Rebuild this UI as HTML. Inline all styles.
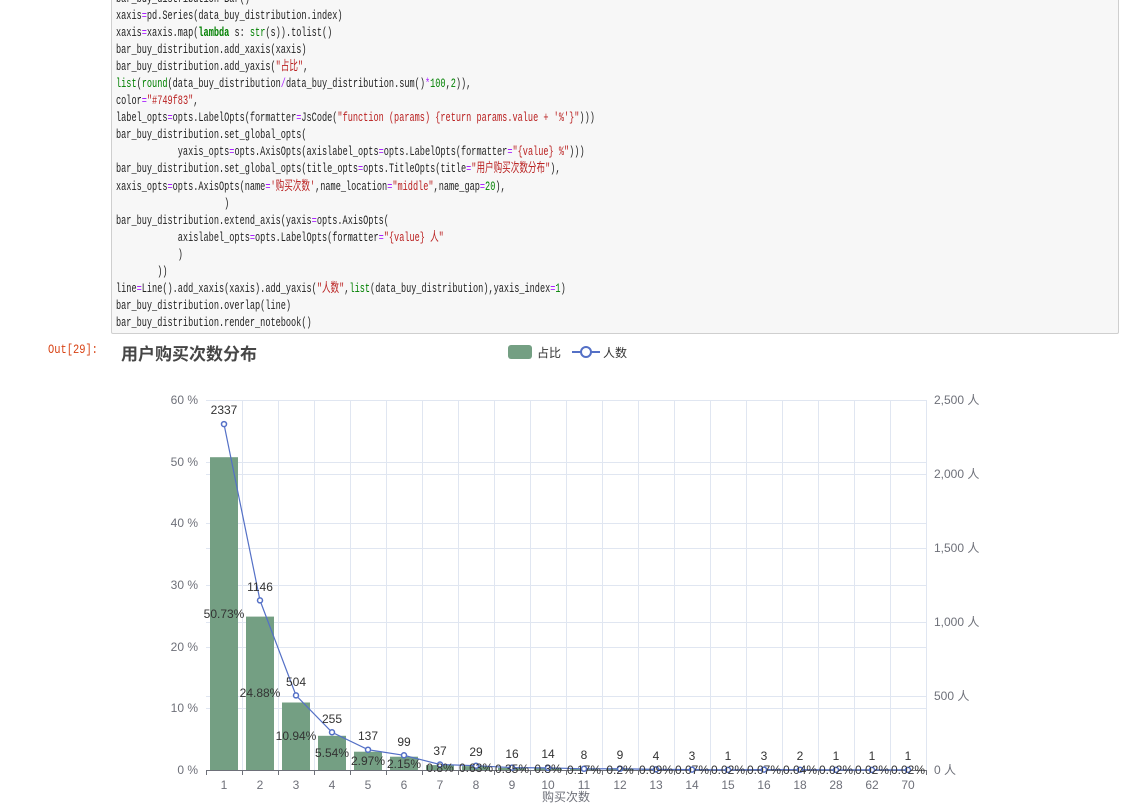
<!DOCTYPE html>
<html><head><meta charset="utf-8"><style>
body{margin:0;width:1137px;height:806px;background:#fff;overflow:hidden;position:relative;font-family:"Liberation Sans","Noto Sans CJK SC",sans-serif}
.cell{position:absolute;left:111px;top:-2px;width:1006px;height:334px;background:#f7f7f7;border:1px solid #cfcfcf;border-radius:2px}
.code{position:absolute;left:116px;top:-10px;font-family:"Liberation Mono","Noto Sans CJK SC",monospace;font-size:13px;line-height:17.05px;color:#222;white-space:pre;transform:scaleX(0.66);transform-origin:0 0}
.k{color:#008000;font-weight:bold}.b{color:#008000}.s{color:#BA2121}.o{color:#AA22FF}.n{color:#008000}
.out{position:absolute;left:48px;top:342px;font-family:"Liberation Mono",monospace;font-size:13px;color:#D84315;transform:scaleX(0.8);transform-origin:0 0}
</style></head><body>
<div class="cell"></div>
<div class="code">bar_buy_distribution=Bar()
xaxis<span class="o">=</span>pd.Series(data_buy_distribution.index)
xaxis<span class="o">=</span>xaxis.map(<span class="k">lambda</span> s: <span class="b">str</span>(s)).tolist()
bar_buy_distribution.add_xaxis(xaxis)
bar_buy_distribution.add_yaxis(<span class="s">"占比"</span>,
<span class="b">list</span>(<span class="b">round</span>(data_buy_distribution<span class="o">/</span>data_buy_distribution.sum()<span class="o">*</span><span class="n">100</span>,<span class="n">2</span>)),
color<span class="o">=</span><span class="s">"#749f83"</span>,
label_opts<span class="o">=</span>opts.LabelOpts(formatter<span class="o">=</span>JsCode(<span class="s">"function (params) {return params.value + '%'}"</span>)))
bar_buy_distribution.set_global_opts(
            yaxis_opts<span class="o">=</span>opts.AxisOpts(axislabel_opts<span class="o">=</span>opts.LabelOpts(formatter<span class="o">=</span><span class="s">"{value} %"</span>)))
bar_buy_distribution.set_global_opts(title_opts<span class="o">=</span>opts.TitleOpts(title<span class="o">=</span><span class="s">"用户购买次数分布"</span>),
xaxis_opts<span class="o">=</span>opts.AxisOpts(name<span class="o">=</span><span class="s">'购买次数'</span>,name_location<span class="o">=</span><span class="s">"middle"</span>,name_gap<span class="o">=</span><span class="n">20</span>),
                     )
bar_buy_distribution.extend_axis(yaxis<span class="o">=</span>opts.AxisOpts(
            axislabel_opts<span class="o">=</span>opts.LabelOpts(formatter<span class="o">=</span><span class="s">"{value} 人"</span>
            )
        ))
line<span class="o">=</span>Line().add_xaxis(xaxis).add_yaxis(<span class="s">"人数"</span>,<span class="b">list</span>(data_buy_distribution),yaxis_index<span class="o">=</span><span class="n">1</span>)
bar_buy_distribution.overlap(line)
bar_buy_distribution.render_notebook()</div>
<div class="out">Out[29]:</div>
<svg width="1137" height="806" style="position:absolute;left:0;top:0" font-family="Liberation Sans,Noto Sans CJK SC,sans-serif">
<text x="121" y="360" font-size="17" font-weight="bold" fill="#464646">用户购买次数分布</text>
<rect x="508" y="345" width="24" height="14" rx="3" fill="#749f83"/>
<text x="537" y="357" font-size="12" fill="#333">占比</text>
<line x1="572" y1="352" x2="600" y2="352" stroke="#5470c6" stroke-width="2"/>
<circle cx="586" cy="352" r="5" fill="#fff" stroke="#5470c6" stroke-width="2"/>
<text x="603" y="357" font-size="12" fill="#333">人数</text>
<g stroke="#e0e6f1" stroke-width="1">
<line x1="206" y1="400.5" x2="926" y2="400.5"/><line x1="206" y1="462.5" x2="926" y2="462.5"/><line x1="206" y1="523.5" x2="926" y2="523.5"/><line x1="206" y1="585.5" x2="926" y2="585.5"/><line x1="206" y1="647.5" x2="926" y2="647.5"/><line x1="206" y1="708.5" x2="926" y2="708.5"/>
<line x1="206" y1="474.5" x2="926" y2="474.5"/><line x1="206" y1="548.5" x2="926" y2="548.5"/><line x1="206" y1="622.5" x2="926" y2="622.5"/><line x1="206" y1="696.5" x2="926" y2="696.5"/>
<line x1="242.5" y1="400" x2="242.5" y2="770"/><line x1="278.5" y1="400" x2="278.5" y2="770"/><line x1="314.5" y1="400" x2="314.5" y2="770"/><line x1="350.5" y1="400" x2="350.5" y2="770"/><line x1="386.5" y1="400" x2="386.5" y2="770"/><line x1="422.5" y1="400" x2="422.5" y2="770"/><line x1="458.5" y1="400" x2="458.5" y2="770"/><line x1="494.5" y1="400" x2="494.5" y2="770"/><line x1="530.5" y1="400" x2="530.5" y2="770"/><line x1="566.5" y1="400" x2="566.5" y2="770"/><line x1="602.5" y1="400" x2="602.5" y2="770"/><line x1="638.5" y1="400" x2="638.5" y2="770"/><line x1="674.5" y1="400" x2="674.5" y2="770"/><line x1="710.5" y1="400" x2="710.5" y2="770"/><line x1="746.5" y1="400" x2="746.5" y2="770"/><line x1="782.5" y1="400" x2="782.5" y2="770"/><line x1="818.5" y1="400" x2="818.5" y2="770"/><line x1="854.5" y1="400" x2="854.5" y2="770"/><line x1="890.5" y1="400" x2="890.5" y2="770"/><line x1="926.5" y1="400" x2="926.5" y2="770"/>
</g>
<g fill="#749f83">
<rect x="210" y="457.2" width="28" height="312.8"/><rect x="246" y="616.6" width="28" height="153.4"/><rect x="282" y="702.5" width="28" height="67.5"/><rect x="318" y="735.8" width="28" height="34.2"/><rect x="354" y="751.7" width="28" height="18.3"/><rect x="390" y="756.7" width="28" height="13.3"/><rect x="426" y="765.1" width="28" height="4.9"/><rect x="462" y="766.1" width="28" height="3.9"/><rect x="498" y="767.8" width="28" height="2.2"/><rect x="534" y="768.2" width="28" height="1.8"/><rect x="570" y="769" width="28" height="1"/><rect x="606" y="768.8" width="28" height="1.2"/><rect x="642" y="769.4" width="28" height="0.6"/><rect x="678" y="769.5" width="28" height="0.5"/><rect x="750" y="769.5" width="28" height="0.5"/>
</g>
<g stroke="#6e7079" stroke-width="1">
<line x1="206" y1="770.5" x2="926" y2="770.5"/>
<line x1="206.5" y1="770" x2="206.5" y2="775"/><line x1="242.5" y1="770" x2="242.5" y2="775"/><line x1="278.5" y1="770" x2="278.5" y2="775"/><line x1="314.5" y1="770" x2="314.5" y2="775"/><line x1="350.5" y1="770" x2="350.5" y2="775"/><line x1="386.5" y1="770" x2="386.5" y2="775"/><line x1="422.5" y1="770" x2="422.5" y2="775"/><line x1="458.5" y1="770" x2="458.5" y2="775"/><line x1="494.5" y1="770" x2="494.5" y2="775"/><line x1="530.5" y1="770" x2="530.5" y2="775"/><line x1="566.5" y1="770" x2="566.5" y2="775"/><line x1="602.5" y1="770" x2="602.5" y2="775"/><line x1="638.5" y1="770" x2="638.5" y2="775"/><line x1="674.5" y1="770" x2="674.5" y2="775"/><line x1="710.5" y1="770" x2="710.5" y2="775"/><line x1="746.5" y1="770" x2="746.5" y2="775"/><line x1="782.5" y1="770" x2="782.5" y2="775"/><line x1="818.5" y1="770" x2="818.5" y2="775"/><line x1="854.5" y1="770" x2="854.5" y2="775"/><line x1="890.5" y1="770" x2="890.5" y2="775"/><line x1="926.5" y1="770" x2="926.5" y2="775"/>
</g>
<g font-size="12" fill="#6e7079" text-anchor="end">
<text x="198" y="404">60 %</text><text x="198" y="466">50 %</text><text x="198" y="527">40 %</text><text x="198" y="589">30 %</text><text x="198" y="651">20 %</text><text x="198" y="712">10 %</text><text x="198" y="774">0 %</text>
</g>
<g font-size="12" fill="#6e7079">
<text x="934" y="404">2,500 人</text><text x="934" y="478">2,000 人</text><text x="934" y="552">1,500 人</text><text x="934" y="626">1,000 人</text><text x="934" y="700">500 人</text><text x="934" y="774">0 人</text>
</g>
<g font-size="12" fill="#6e7079" text-anchor="middle">
<text x="224" y="789">1</text><text x="260" y="789">2</text><text x="296" y="789">3</text><text x="332" y="789">4</text><text x="368" y="789">5</text><text x="404" y="789">6</text><text x="440" y="789">7</text><text x="476" y="789">8</text><text x="512" y="789">9</text><text x="548" y="789">10</text><text x="584" y="789">11</text><text x="620" y="789">12</text><text x="656" y="789">13</text><text x="692" y="789">14</text><text x="728" y="789">15</text><text x="764" y="789">16</text><text x="800" y="789">18</text><text x="836" y="789">28</text><text x="872" y="789">62</text><text x="908" y="789">70</text>
<text x="566" y="801">购买次数</text>
</g>
<polyline fill="none" stroke="#5470c6" stroke-width="1.2" points="224,424.1 260,600.4 296,695.4 332,732.3 368,749.7 404,755.3 440,764.5 476,765.7 512,767.6 548,767.9 584,768.8 620,768.7 656,769.4 692,769.6 728,769.9 764,769.6 800,769.7 836,769.9 872,769.9 908,769.9"/>
<g fill="#fff" stroke="#5470c6" stroke-width="1.5">
<circle cx="224" cy="424.1" r="2.5"/><circle cx="260" cy="600.4" r="2.5"/><circle cx="296" cy="695.4" r="2.5"/><circle cx="332" cy="732.3" r="2.5"/><circle cx="368" cy="749.7" r="2.5"/><circle cx="404" cy="755.3" r="2.5"/><circle cx="440" cy="764.5" r="2.5"/><circle cx="476" cy="765.7" r="2.5"/><circle cx="512" cy="767.6" r="2.5"/><circle cx="548" cy="767.9" r="2.5"/><circle cx="584" cy="768.8" r="2.5"/><circle cx="620" cy="768.7" r="2.5"/><circle cx="656" cy="769.4" r="2.5"/><circle cx="692" cy="769.6" r="2.5"/><circle cx="728" cy="769.9" r="2.5"/><circle cx="764" cy="769.6" r="2.5"/><circle cx="800" cy="769.7" r="2.5"/><circle cx="836" cy="769.9" r="2.5"/><circle cx="872" cy="769.9" r="2.5"/><circle cx="908" cy="769.9" r="2.5"/>
</g>
<g font-size="12" fill="#333" text-anchor="middle">
<text x="224" y="414">2337</text><text x="260" y="591">1146</text><text x="296" y="686">504</text><text x="332" y="723">255</text><text x="368" y="740">137</text><text x="404" y="746">99</text><text x="440" y="755">37</text><text x="476" y="756">29</text><text x="512" y="758">16</text><text x="548" y="758">14</text><text x="584" y="759">8</text><text x="620" y="759">9</text><text x="656" y="760">4</text><text x="692" y="760">3</text><text x="728" y="760">1</text><text x="764" y="760">3</text><text x="800" y="760">2</text><text x="836" y="760">1</text><text x="872" y="760">1</text><text x="908" y="760">1</text>
</g>
<g font-size="12" fill="#333" text-anchor="middle">
<text x="224" y="618">50.73%</text><text x="260" y="697">24.88%</text><text x="296" y="740">10.94%</text><text x="332" y="757">5.54%</text><text x="368" y="765">2.97%</text><text x="404" y="768">2.15%</text><text x="440" y="772">0.8%</text><text x="476" y="772">0.63%</text><text x="512" y="773">0.35%</text><text x="548" y="773">0.3%</text><text x="584" y="774">0.17%</text><text x="620" y="774">0.2%</text><text x="656" y="774">0.09%</text><text x="692" y="774">0.07%</text><text x="728" y="774">0.02%</text><text x="764" y="774">0.07%</text><text x="800" y="774">0.04%</text><text x="836" y="774">0.02%</text><text x="872" y="774">0.02%</text><text x="908" y="774">0.02%</text>
</g>
</svg>
</body></html>
